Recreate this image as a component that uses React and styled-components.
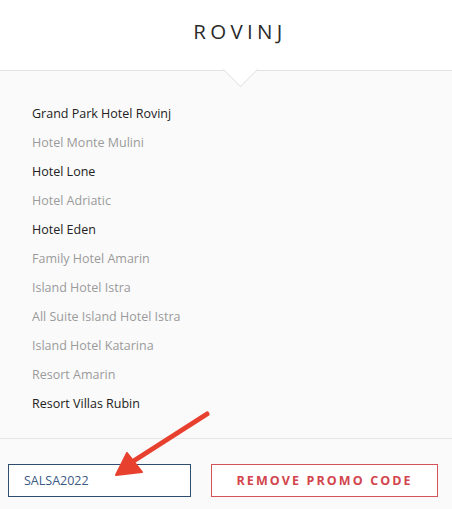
import React from 'react'
import styled, { createGlobalStyle } from 'styled-components'

const Global = createGlobalStyle`
  html, body {
    margin: 0;
    padding: 0;
    background: #fafafa;
  }
  body {
    font-family: "Open Sans", "Liberation Sans", sans-serif;
  }
`

const Page = styled.div`
  position: relative;
  width: 452px;
  height: 509px;
  overflow: hidden;
  background: #fafafa;
`

const Header = styled.div`
  position: relative;
  height: 71px;
  background: #fff;
  border-bottom: 1px solid #e3e3e3;
  display: flex;
  justify-content: center;
  padding-left: 28px;
  box-sizing: border-box;
  h1 {
    margin: 0;
    padding-top: 17px;
    font-size: 20.5px;
    font-weight: 400;
    letter-spacing: 4.3px;
    color: #2a2a2a;
  }
  &::after {
    content: '';
    position: absolute;
    left: 228px;
    bottom: -12px;
    width: 24px;
    height: 24px;
    background: #fff;
    border-right: 1px solid #e6e6e6;
    border-bottom: 1px solid #e6e6e6;
    transform: rotate(45deg);
  }
`

const List = styled.ul`
  list-style: none;
  margin: 0;
  padding: 32px 0 16px 32px;
  border-bottom: 1px solid #e6e6e6;
`

const Item = styled.li`
  height: 29px;
  line-height: 22px;
  font-size: 12.5px;
  color: ${p => (p.active ? '#222' : '#9a9a9a')};
`

const Footer = styled.div`
  display: flex;
  gap: 20px;
  padding: 25px 14px 0 8px;
`

const CodeBox = styled.div`
  width: 184px;
  height: 33px;
  box-sizing: border-box;
  border: 1px solid #2f4d6e;
  background: #fff;
  display: flex;
  align-items: center;
  padding-left: 15px;
  font-size: 12.5px;
  color: #3b5b85;
`

const RemoveButton = styled.button`
  width: 228px;
  height: 33px;
  box-sizing: border-box;
  border: 1px solid #d2545a;
  background: #fff;
  color: #d2454c;
  font-family: "Open Sans", "Liberation Sans", sans-serif;
  font-size: 12.5px;
  font-weight: 700;
  letter-spacing: 2.1px;
  padding: 0;
`

const Arrow = styled.svg`
  position: absolute;
  left: 0;
  top: 0;
  pointer-events: none;
`

const hotels = [
  ['Grand Park Hotel Rovinj', true],
  ['Hotel Monte Mulini', false],
  ['Hotel Lone', true],
  ['Hotel Adriatic', false],
  ['Hotel Eden', true],
  ['Family Hotel Amarin', false],
  ['Island Hotel Istra', false],
  ['All Suite Island Hotel Istra', false],
  ['Island Hotel Katarina', false],
  ['Resort Amarin', false],
  ['Resort Villas Rubin', true],
]

const App = () => {
  return (
    <Page>
      <Global />
      <Header>
        <h1>ROVINJ</h1>
      </Header>
      <List>
        {hotels.map(([name, active]) => (
          <Item key={name} active={active}>
            {name}
          </Item>
        ))}
      </List>
      <Footer>
        <CodeBox>SALSA2022</CodeBox>
        <RemoveButton>REMOVE PROMO CODE</RemoveButton>
      </Footer>
      <Arrow width="452" height="509" viewBox="0 0 452 509">
        <line x1="207" y1="414" x2="132" y2="462" stroke="#e8402f" strokeWidth="5" strokeLinecap="round" />
        <polygon points="116,475 127,453 142,472" fill="#e8402f" stroke="#e8402f" strokeWidth="2" strokeLinejoin="round" />
      </Arrow>
    </Page>
  )
}

export default App
